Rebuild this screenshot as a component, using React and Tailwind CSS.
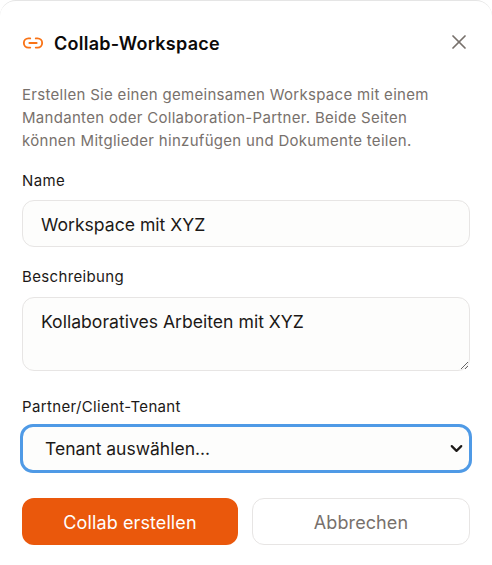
import React from 'react';
import { ChevronDown, Link2, X } from 'lucide-react';

const font = { fontFamily: '"Inter", "Noto Sans", sans-serif' };

const App = () => {
  return (
    <div className="h-[565px] w-[492px] overflow-hidden bg-white" style={font}>
      <div className="h-[580px] w-[492px] rounded-t-2xl border-t border-[#e5e5e5] bg-white px-[22px] pt-[28px]">
        <div className="flex h-[28px] items-center justify-between">
          <div className="flex items-center gap-[10px]">
            <Link2 className="h-[22px] w-[22px] text-[#f97316]" strokeWidth={2} />
            <h2 className="text-[18px] font-semibold tracking-[0.25px] text-[#0c0a09]">Collab-Workspace</h2>
          </div>
          <button className="-mt-[2px] -mr-[1px] text-[#78716c]">
            <X className="h-[24px] w-[24px]" strokeWidth={1.75} />
          </button>
        </div>

        <p className="mt-[27px] w-[430px] text-[15px] leading-[22.75px] tracking-[0.3px] text-[#78716c]">
          Erstellen Sie einen gemeinsamen Workspace mit einem Mandanten oder Collaboration-Partner. Beide Seiten können Mitglieder hinzufügen und Dokumente teilen.
        </p>

        <label className="mt-[17px] block text-[15px] leading-[24px] tracking-[0.35px] text-[#1c1917]">Name</label>
        <input
          readOnly
          value="Workspace mit XYZ"
          className="mt-[7px] block h-[47px] w-[448px] rounded-xl border border-[#e7e5e4] bg-[#fdfdfc] px-[18px] pt-[1px] text-[17.6px] text-[#1c1917] outline-none"
          style={font}
        />

        <label className="mt-[18px] block text-[15px] leading-[24px] tracking-[0.35px] text-[#1c1917]">Beschreibung</label>
        <textarea
          readOnly
          value="Kollaboratives Arbeiten mit XYZ"
          className="mt-[8px] block h-[74px] w-[448px] rounded-xl border border-[#e7e5e4] bg-[#fdfdfc] px-[18px] py-[11px] text-[17.6px] leading-[25px] text-[#1c1917] outline-none"
          style={font}
        />

        <label className="mt-[24px] block text-[15px] leading-[24px] tracking-[0.35px] text-[#1c1917]">Partner/Client-Tenant</label>
        <div className="relative mt-[5px] -ml-[2px] w-[452px]">
          <select
            className="block h-[49px] w-full appearance-none rounded-[13px] border-[3px] border-[#4f9ae6] bg-[#fdfdfc] px-[22px] text-[17.5px] text-[#1c1917] outline-none"
            style={font}
          >
            <option>Tenant auswählen...</option>
          </select>
          <ChevronDown className="pointer-events-none absolute top-[15px] right-[6px] h-[19px] w-[19px] text-[#1c1917]" strokeWidth={2.75} />
        </div>

        <div className="mt-[25px] flex gap-[14px]">
          <button className="h-[47px] w-[216px] shrink-0 rounded-xl bg-[#ea580c] pt-[1px] text-[18px] tracking-[0.1px] text-white">Collab erstellen</button>
          <button className="h-[47px] w-[218px] shrink-0 rounded-xl border border-[#e7e5e4] bg-white pt-[1px] text-[18px] tracking-[0.1px] text-[#78716c]">Abbrechen</button>
        </div>
      </div>
    </div>
  );
};

export default App;
